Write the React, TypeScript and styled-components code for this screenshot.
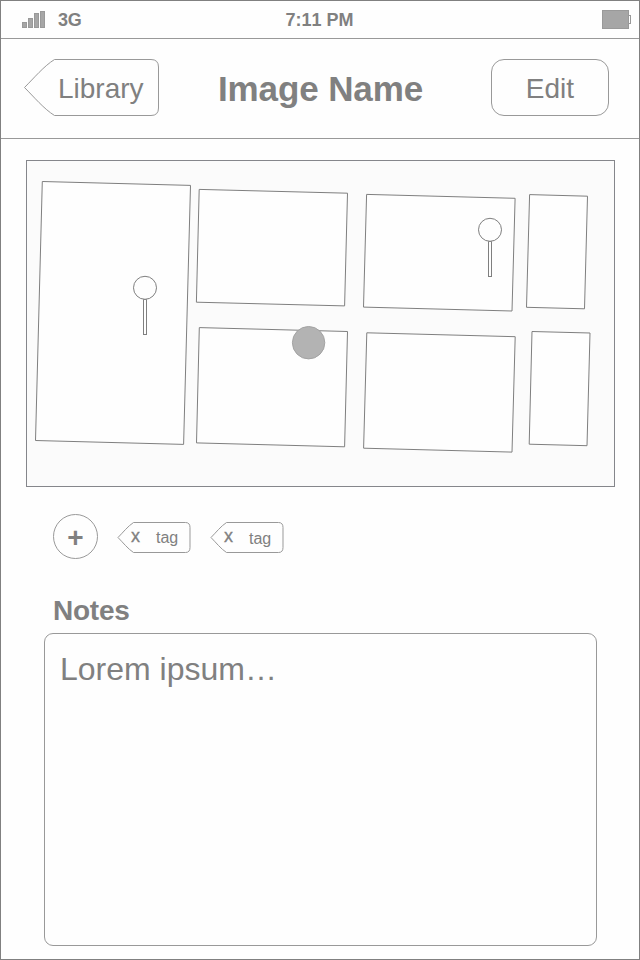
import React from "react";
import styled, { createGlobalStyle } from "styled-components";

const INK = "#808080";
const LINE = "#999999";

const GlobalStyle = createGlobalStyle`
  body {
    margin: 0;
    background: #fefefe;
  }
  * {
    box-sizing: border-box;
  }
`;

const Screen = styled.div`
  width: 640px;
  height: 960px;
  display: flex;
  flex-direction: column;
  border: 1px solid ${INK};
  background: #fefefe;
  color: ${INK};
  font-family: "Liberation Sans", Arial, sans-serif;
  font-kerning: none;
  overflow: hidden;
`;

const StatusBar = styled.header`
  flex: none;
  height: 38px;
  display: grid;
  grid-template-columns: 1fr auto 1fr;
  align-items: center;
  padding: 0 8px 0 21px;
  border-bottom: 1px solid ${LINE};
  font-size: 18px;
  font-weight: bold;
  line-height: 37px;
`;

const Carrier = styled.div`
  display: flex;
  align-items: center;
  gap: 13px;
`;

const Network = styled.span`
  padding-top: 2px;
  letter-spacing: -0.3px;
  line-height: 35px;
`;

const Clock = styled.time`
  padding: 1px 14px 0 0;
  line-height: 36px;
`;

const Battery = styled.svg`
  display: block;
  justify-self: end;
`;

const NavBar = styled.nav`
  flex: none;
  height: 100px;
  display: flex;
  align-items: center;
  justify-content: space-between;
  padding: 0 30px 3px 23px;
  border-bottom: 1px solid ${LINE};
`;

const Title = styled.h1`
  margin: 3px 0 0 -9px;
  font-size: 35px;
  letter-spacing: -0.12px;
  line-height: 57px;
  font-weight: bold;
`;

const Outline = styled.svg`
  position: absolute;
  inset: 0;
  overflow: visible;
  fill: #fefefe;
  stroke: ${LINE};
`;

const BackButton = styled.button`
  position: relative;
  width: 135px;
  height: 57px;
  padding: 2px 0 0 34px;
  border: 0;
  background: none;
  color: inherit;
  font: 28px/55px "Liberation Sans", Arial, sans-serif;
  text-align: left;
`;

const Label = styled.span`
  position: relative;
`;

const EditButton = styled.button`
  width: 118px;
  height: 57px;
  padding: 2px 0 0;
  border: 1px solid ${LINE};
  border-radius: 13px;
  background: #fefefe;
  color: inherit;
  font: 28px/53px "Liberation Sans", Arial, sans-serif;
`;

const Board = styled.figure`
  flex: none;
  width: 589px;
  height: 327px;
  margin: 21px 0 0 25px;
  border: 1px solid #85868b;
  background: #fbfbfb;
`;

const Drawing = styled.svg`
  display: block;
  stroke: #7f7f7f;
  fill: #fefefe;
`;

const TagRow = styled.div`
  flex: none;
  display: flex;
  align-items: flex-start;
  height: 46px;
  margin: 27px 0 0 52px;
`;

const AddButton = styled.button`
  width: 45px;
  height: 45px;
  margin-right: 19px;
  padding: 2px 0 0;
  display: grid;
  place-items: center;
  border: 1px solid ${LINE};
  border-radius: 50%;
  background: none;
  color: inherit;
  font: bold 28px/41px "Liberation Sans", Arial, sans-serif;
`;

const TagBox = styled.div`
  position: relative;
  display: flex;
  width: 74px;
  height: 31px;
  margin: 8px 19px 0 0;
  padding-left: 14px;
  font-size: 16px;
  line-height: 31px;
`;

const TagLabel = styled(Label)<{ $drop: number }>`
  padding-top: ${(p) => p.$drop}px;
`;

const Remove = styled.span`
  position: relative;
  width: 25px;
  font-size: 18px;
  line-height: 29px;
  -webkit-text-stroke: 0.3px ${INK};
`;

const NotesHeading = styled.h2`
  flex: none;
  margin: 34px 0 0 52px;
  font-size: 28px;
  letter-spacing: -0.25px;
  line-height: 34px;
  font-weight: bold;
`;

const NotesField = styled.div`
  flex: none;
  width: 553px;
  height: 313px;
  margin: 5px 0 0 43px;
  padding: 17px 15px;
  border: 1px solid ${LINE};
  border-radius: 9px;
  font-size: 32px;
  line-height: 37px;
`;

function Signal() {
  return (
    <svg width="23" height="18" fill="#a6a6a6" stroke="#999999">
      <rect x="0.5" y="11.5" width="4" height="5" />
      <rect x="6.5" y="7.5" width="4" height="9" />
      <rect x="12.5" y="2.5" width="4" height="14" />
      <rect x="18.5" y="0.5" width="4" height="16" />
    </svg>
  );
}

function Tag({ label, drop = 0 }: { label: string; drop?: number }) {
  return (
    <TagBox>
      <Outline width="74" height="31">
        <path d="M1 15.5 C5.5 11 11 4 16.5 0.5 H68.5 Q73 0.5 73 5.5 V25.5 Q73 30.5 68.5 30.5 H16.5 C11 27 5.5 20 1 15.5 Z" />
      </Outline>
      <Remove>x</Remove>
      <TagLabel $drop={drop}>{label}</TagLabel>
    </TagBox>
  );
}

function Pin({ x, y }: { x: number; y: number }) {
  return (
    <g transform={`translate(${x} ${y})`}>
      <rect x="-1.5" y="11.7" width="3" height="35" />
      <circle r="11.5" />
    </g>
  );
}

const panels = [
  "42.3,181.5 190.5,185.4 183.6,444.4 35.5,440.5",
  "199.2,189.4 347.5,193.2 344.6,305.9 196.4,302.2",
  "366.6,194.4 515.1,198.3 512,311 363.5,307.1",
  "529.6,194.6 587.5,196.2 584.5,308.8 526.5,307.3",
  "199.3,327.6 347.5,331.5 344.6,446.8 196.5,442.9",
  "366.8,332.8 515.2,336.7 512,452.1 363.6,448.2",
  "532,331.5 590,333 587,445.7 529.2,444.2",
];

export default function App() {
  return (
    <>
      <GlobalStyle />
      <Screen>
        <StatusBar>
          <Carrier>
            <Signal />
            <Network>3G</Network>
          </Carrier>
          <Clock>7:11 PM</Clock>
          <Battery width="29" height="19" fill="#a6a6a6" stroke="#999999">
            <rect x="26.5" y="5.5" width="2" height="8" fill="#fefefe" />
            <rect x="0.5" y="0.5" width="26" height="18" />
          </Battery>
        </StatusBar>
        <NavBar>
          <BackButton>
            <Outline width="135" height="57">
              <path d="M0.5 28.5 C10 19 20 7 30.5 0.5 H127 Q134.5 0.5 134.5 8 V49 Q134.5 56.5 127 56.5 H30.5 C20 50 10 38 0.5 28.5 Z" />
            </Outline>
            <Label>Library</Label>
          </BackButton>
          <Title>Image Name</Title>
          <EditButton>Edit</EditButton>
        </NavBar>
        <Board>
          <Drawing width="587" height="325" viewBox="27 161 587 325">
            {panels.map((points) => (
              <polygon key={points} points={points} />
            ))}
            <Pin x={145} y={287.8} />
            <Pin x={490} y={229.8} />
            <circle cx="308.6" cy="342.7" r="16.2" fill="#b3b3b3" stroke="#a3a3a3" />
          </Drawing>
        </Board>
        <TagRow>
          <AddButton>+</AddButton>
          <Tag label="tag" />
          <Tag label="tag" drop={1} />
        </TagRow>
        <NotesHeading>Notes</NotesHeading>
        <NotesField>Lorem ipsum…</NotesField>
      </Screen>
    </>
  );
}
